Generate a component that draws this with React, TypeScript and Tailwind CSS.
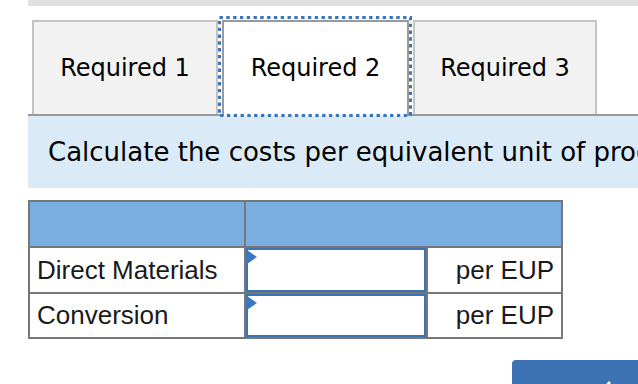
import React from 'react'

const verdana = { fontFamily: '"DejaVu Sans", Verdana, sans-serif' }

function Tab({ label, active }: { label: string; active?: boolean }) {
  if (active) {
    return (
      <div className="relative -mb-[2px] ml-[4px] w-[187px]">
        <button
          className="flex h-[96px] w-full items-center justify-center border-2 border-b-0 border-[#9a9a9a] bg-white pb-[2px] text-[24px] text-black"
          style={verdana}
        >
          {label}
        </button>
        {/* focus ring */}
        <svg
          className="pointer-events-none absolute -left-[4px] -top-[4px]"
          width="194"
          height="101"
          viewBox="0 0 194 101"
          fill="none"
        >
          <rect x="1.5" y="1.5" width="191" height="98" stroke="#3b76bd" strokeWidth="3" strokeDasharray="3.4 3.4" />
        </svg>
      </div>
    )
  }
  return (
    <button
      className="flex h-[94px] w-full items-center justify-center border-2 border-b-0 border-[#c4c4c4] bg-[#f2f2f2] text-[24px] text-black"
      style={verdana}
    >
      {label}
    </button>
  )
}

function EntryCell() {
  return (
    <div className="relative bg-white p-0">
      <input className="h-full w-full border-2 border-[#3b73b9] bg-white outline-none" />
      {/* little flag in the corner of the input */}
      <span className="pointer-events-none absolute left-[1px] top-[2px] h-0 w-0 border-y-[7px] border-l-[10px] border-y-transparent border-l-[#3b78c1]" />
    </div>
  )
}

export default function App() {
  return (
    <div className="h-[384px] w-[638px] overflow-hidden bg-white pl-[28px]">
      {/* top rule */}
      <div className="h-[6px] bg-[#e0e0e0]" />

      {/* tabs */}
      <div className="mt-[14px] flex items-end border-b-2 border-[#9a9a9a] pl-[4px]">
        <div className="w-[186px]">
          <Tab label="Required 1" />
        </div>
        <Tab label="Required 2" active />
        <div className="ml-[4px] w-[184px]">
          <Tab label="Required 3" />
        </div>
      </div>

      {/* instructions */}
      <div
        className="flex h-[72px] items-center overflow-hidden whitespace-nowrap bg-[#dbeaf7] pl-[20px] text-[26px] text-black"
        style={verdana}
      >
        Calculate the costs per equivalent unit of production.
      </div>

      {/* table */}
      <div
        className="mt-[12px] grid w-[535px] grid-cols-[214px_180px_133px] grid-rows-[44px_44px_43px] gap-[2px] border-2 border-[#777] bg-[#777] text-[26px] text-[#1a1a1a]"
        style={{ fontFamily: '"Liberation Sans", Arial, sans-serif' }}
      >
        <div className="bg-[#7aaee1]" />
        <div className="col-span-2 bg-[#7aaee1]" />

        <div className="flex items-center bg-white pl-[7px]">Direct Materials</div>
        <EntryCell />
        <div className="flex items-center justify-end bg-white pr-[7px]">per EUP</div>

        <div className="flex items-center bg-white pl-[7px]">Conversion</div>
        <EntryCell />
        <div className="flex items-center justify-end bg-white pr-[7px]">per EUP</div>
      </div>

      {/* nav button, mostly below the fold */}
      <div className="mt-[21px] flex">
        <button className="ml-[484px] flex h-[40px] w-[140px] shrink-0 items-start rounded-tl-[4px] bg-[#3d73b5] pl-[90px] pt-[21px]">
          <svg width="10" height="14" viewBox="0 0 10 14" fill="none">
            <path d="M8 1 L2 7 L8 13" stroke="white" strokeWidth="2.5" />
          </svg>
        </button>
      </div>
    </div>
  )
}
